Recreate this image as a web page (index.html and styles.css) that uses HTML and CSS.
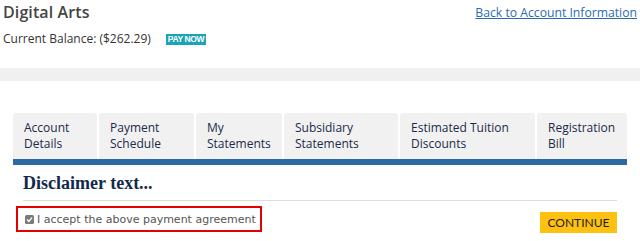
FILE: index.html
```html
<!DOCTYPE html>
<html>
<head>
<meta charset="utf-8">
<link rel="stylesheet" href="styles.css">
</head>
<body>
<header class="top">
  <div class="top-left">
    <h1 class="title">Digital Arts</h1>
    <div class="balance">
      <span class="balance-text">Current Balance: ($262.29)</span>
      <span class="pay-now">PAY NOW</span>
    </div>
  </div>
  <a class="back-link" href="#">Back to Account Information</a>
</header>
<div class="band"></div>
<main class="panel">
  <nav class="tabs">
    <div class="tab t1">Account<br>Details</div>
    <div class="tab t2">Payment<br>Schedule</div>
    <div class="tab t3">My<br>Statements</div>
    <div class="tab t4">Subsidiary<br>Statements</div>
    <div class="tab t5">Estimated Tuition<br>Discounts</div>
    <div class="tab t6">Registration<br>Bill</div>
  </nav>
  <div class="tab-rule"></div>
  <section class="content">
    <h2 class="disclaimer">Disclaimer text...</h2>
    <div class="rule"></div>
    <div class="actions">
      <label class="accept"><span class="chk"><svg width="9" height="9" viewBox="0 0 9 9"><rect x="0" y="0" width="9" height="9" rx="1.5" fill="#7a7a7a"/><path d="M2 4.6 L3.8 6.4 L7 2.6" fill="none" stroke="#fff" stroke-width="1.4"/></svg></span>I accept the above payment agreement</label>
      <button class="continue">CONTINUE</button>
    </div>
  </section>
</main>
</body>
</html>
```
FILE: styles.css
```css
html, body { margin: 0; padding: 0; background: #fff; }
body { font-family: "Open Sans", "Noto Sans", sans-serif; width: 640px; height: 241px; overflow: hidden; }

.top { display: flex; justify-content: space-between; align-items: flex-start; padding: 2px 3px 0 3px; height: 66px; box-sizing: border-box; }
.title { margin: 0; font-size: 16px; font-weight: 600; color: #444; line-height: 20px; letter-spacing: 0.1px; }
.balance { display: flex; align-items: center; margin-top: 9px; }
.balance-text { font-size: 12px; color: #333; line-height: 16px; }
.pay-now { margin-left: 15px; background: #1ba4b5; color: #fff; font-family: "Liberation Sans", sans-serif; font-weight: 700; font-size: 8.5px; letter-spacing: -0.4px; padding: 1px 2px; line-height: 9px; height: 9px; display: inline-block; }
.back-link { font-size: 12.2px; color: #2b6cb0; text-decoration: underline; margin-top: 3px; line-height: 16px; }

.band { height: 13px; background: #f0f0f0; margin-top: 2px; }

.panel { padding: 32px 13px 0 13px; }
.tabs { display: flex; gap: 2px; width: 614px; }
.tab { background: #f1f1f1; border-radius: 3px 3px 0 0; height: 46px; box-sizing: border-box; padding: 7px 0 0 11px; font-size: 12px; line-height: 16px; color: #1c2a48; }
.t1 { width: 84px; }
.t2 { width: 95px; }
.t3 { width: 86px; }
.t4 { width: 114px; }
.t5 { width: 135px; }
.t6 { flex: 1; }
.tab-rule { height: 6px; background: #2c69a4; width: 614px; }

.content { padding: 0 10px; width: 594px; }
.disclaimer { margin: 0; padding-top: 8px; height: 27px; font-family: "Liberation Serif", serif; font-size: 18px; font-weight: 700; color: #13294b; line-height: 20px; letter-spacing: 0; }
.rule { height: 1px; background: #ddd; }
.actions { display: flex; justify-content: space-between; align-items: flex-start; margin-top: 5px; margin-left: -7px; }
.accept { display: flex; align-items: center; border: 2px solid #e50000; height: 26px; width: 246px; box-sizing: border-box; padding-left: 7px; font-family: "DejaVu Sans", Verdana, sans-serif; font-size: 11px; color: #555; }
.chk { display: inline-flex; margin-right: 3px; }
.continue { margin-top: 6px; background: #fec10f; border: none; width: 77px; height: 21px; padding: 0; font-family: "Lato", sans-serif; font-size: 12px; color: #222; }
```
